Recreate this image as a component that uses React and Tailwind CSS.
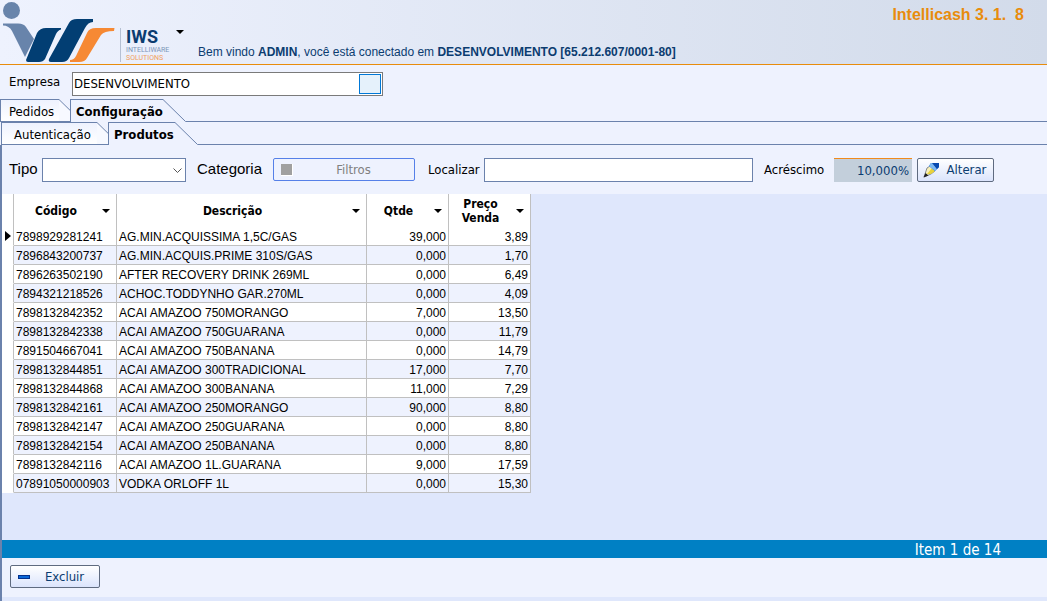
import { useState } from 'react';

const products = [
    { code: '7898929281241', name: 'AG.MIN.ACQUISSIMA 1,5C/GAS', qty: '39,000', price: '3,89' },
    { code: '7896843200737', name: 'AG.MIN.ACQUIS.PRIME 310S/GAS', qty: '0,000', price: '1,70' },
    { code: '7896263502190', name: 'AFTER RECOVERY DRINK 269ML', qty: '0,000', price: '6,49' },
    { code: '7894321218526', name: 'ACHOC.TODDYNHO GAR.270ML', qty: '0,000', price: '4,09' },
    { code: '7898132842352', name: 'ACAI AMAZOO 750MORANGO', qty: '7,000', price: '13,50' },
    { code: '7898132842338', name: 'ACAI AMAZOO 750GUARANA', qty: '0,000', price: '11,79' },
    { code: '7891504667041', name: 'ACAI AMAZOO 750BANANA', qty: '0,000', price: '14,79' },
    { code: '7898132844851', name: 'ACAI AMAZOO 300TRADICIONAL', qty: '17,000', price: '7,70' },
    { code: '7898132844868', name: 'ACAI AMAZOO 300BANANA', qty: '11,000', price: '7,29' },
    { code: '7898132842161', name: 'ACAI AMAZOO 250MORANGO', qty: '90,000', price: '8,80' },
    { code: '7898132842147', name: 'ACAI AMAZOO 250GUARANA', qty: '0,000', price: '8,80' },
    { code: '7898132842154', name: 'ACAI AMAZOO 250BANANA', qty: '0,000', price: '8,80' },
    { code: '7898132842116', name: 'ACAI AMAZOO 1L.GUARANA', qty: '9,000', price: '17,59' },
    { code: '07891050000903', name: 'VODKA ORLOFF 1L', qty: '0,000', price: '15,30' },
];

const Logo = () => (
    <svg width="120" height="64" viewBox="0 0 120 64" className="shrink-0" aria-hidden="true">
        <circle cx="11.5" cy="10.5" r="8.5" fill="#6884ab" />
        <path d="M3 23.5H18Q24 23.5 26 27L34 39L25 57L12 31Q9 25.5 3 25.5Z" fill="#6884ab" />
        <path d="M61 28H46Q40 28 37 33L26 60Q26 62 28 62H39Q43 62 45 59L56 34Q58 30 61 29.5Z" fill="#023e73" />
        <path d="M93 19H77Q71 19 69 23L49 59Q48 62 51 62H62Q67 62 69 58L85 28Q88 22 93 22Z" fill="#023e73" />
        <path d="M114.5 28H96Q89 28 87 33L76 56Q74 60 70 60V62H79Q85 62 87 58L101 35Q104 31 114 31Z" fill="#f68934" />
    </svg>
);

const Caret = () => (
    <svg width="8" height="4" viewBox="0 0 8 4" className="shrink-0" aria-hidden="true">
        <path d="M0 0H8L4 4Z" fill="#000" />
    </svg>
);

const PencilIcon = () => (
    <svg width="17" height="16" viewBox="0 0 17 16" className="shrink-0" aria-hidden="true">
        <path d="M1 15L4 6L7 4L12 9L8 12Z" fill="#f8f0b8" stroke="#6b7280" strokeWidth="0.8" />
        <path d="M4 12L9 6L12 9L8 12Z" fill="#e8d23c" />
        <path d="M0.5 15.5L2.5 11L5.5 13.5Z" fill="#222" />
        <path d="M6 4L8 1H16V5L12 9Z" fill="#0a5fd0" />
        <path d="M6 4L8 1H10L14 7L12 9Z" fill="#7db8f2" />
        <path d="M9 1H16V5L14 7Z" fill="#0648b0" />
    </svg>
);

const Tab = ({ active, onClick, children, className }) => (
    <button
        role="tab"
        aria-selected={active}
        onClick={onClick}
        className={`relative h-[23px] shrink-0 border-l border-t border-[#6b82ac] text-left whitespace-nowrap text-black ${
            active
                ? 'z-10 bg-[#eef2fe] pt-px font-bold'
                : 'border-b bg-linear-to-b from-[#eef2fe] to-white pt-[2px]'
        } ${className}`}
    >
        {children}
        <svg width="23" height="23" viewBox="0 0 23 23" className="absolute -top-px left-full" aria-hidden="true">
            <path d={active ? 'M0 0L23 23H0Z' : 'M0 0L22 22H0Z'} fill={active ? '#eef2fe' : '#f7f9ff'} />
            <path d="M0 0.5L22.5 22.5" fill="none" stroke="#6b82ac" />
        </svg>
    </button>
);

const HeaderCell = ({ children }) => (
    <th className="h-[33px] border-r border-[#c0c0c0] p-0 font-bold">
        <div className="flex items-center pr-[6px]">
            <span className="flex-1 pr-[4px] text-center leading-[14px]">{children}</span>
            <Caret />
        </div>
    </th>
);

const App = () => {
    const [mainTab, setMainTab] = useState('config');
    const [subTab, setSubTab] = useState('produtos');
    const [selected, setSelected] = useState(0);

    return (
        <div className="flex min-h-screen flex-col bg-[#eef2fe] font-['DejaVu_Sans_Condensed','DejaVu_Sans',sans-serif] text-[13px] text-black">
            <header className="flex h-[65px] border-b border-[#e88c0c] bg-linear-to-r from-[#eef2fe] to-[#d2dbea] font-['Liberation_Sans',Arial,sans-serif]">
                <Logo />
                <div className="mt-[28px] flex h-[34px] w-[56px] flex-col border-l border-[#b5c0d3] pl-[5px] font-['Roboto',sans-serif]">
                    <span className="text-[18px] leading-[18px] font-bold text-[#0b3c70]">IWS</span>
                    <span className="text-[7px] leading-[8px] text-[#7d95b8]">INTELLIWARE</span>
                    <span className="text-[7px] leading-[8px] text-[#f0a060]">SOLUTIONS</span>
                </div>
                <button aria-label="Menu" className="flex h-[64px] w-[8px] items-center justify-center">
                    <Caret />
                </button>
                <p className="mt-[44px] ml-[14px] flex-1 text-[12px] leading-[16px] text-[#0b3c70]">
                    Bem vindo <b>ADMIN</b>, você está conectado em <b>DESENVOLVIMENTO [65.212.607/0001-80]</b>
                </p>
                <h1 className="mt-[5px] mr-[23px] text-[16px] leading-[20px] font-bold whitespace-pre text-[#e88c0c]">Intellicash 3. 1.  8</h1>
            </header>

            <div className="flex h-[34px] items-start pt-[7px] pl-[9px]">
                <label htmlFor="empresa" className="w-[63px] leading-[20px]">Empresa</label>
                <div className="flex h-[24px] w-[311px] items-center border border-[#7a7a7a] bg-white pr-px">
                    <input id="empresa" defaultValue="DESENVOLVIMENTO" className="min-w-0 flex-1 px-px outline-none" />
                    <button aria-label="Selecionar empresa" className="h-[20px] w-[22px] border border-[#0078d7] bg-[#e5f1fb]" />
                </div>
            </div>

            <div role="tablist" className="flex">
                <Tab active={mainTab === 'pedidos'} onClick={() => setMainTab('pedidos')} className="w-[59px] pl-[8px]">Pedidos</Tab>
                <div className="w-[11px] border-b border-[#6b82ac]" />
                <Tab active={mainTab === 'config'} onClick={() => setMainTab('config')} className="w-[93px] pl-[5px]">Configuração</Tab>
                <div className="w-[22px]" />
                <div className="flex-1 border-b border-[#6b82ac]" />
            </div>

            <div className="flex flex-1 flex-col">
                <div role="tablist" className="flex pl-px">
                    <Tab active={subTab === 'auth'} onClick={() => setSubTab('auth')} className="w-[96px] pl-[12px]">Autenticação</Tab>
                    <div className="w-[11px] border-b border-[#6b82ac]" />
                    <Tab active={subTab === 'produtos'} onClick={() => setSubTab('produtos')} className="w-[67px] pl-[5px]">Produtos</Tab>
                    <div className="w-[22px]" />
                    <div className="flex-1 border-b border-[#6b82ac]" />
                </div>

                <main className="flex flex-1 flex-col border-l-2 border-[#6b82ac]">
                    <div className="flex h-[49px] items-center pl-[7px]">
                        <label htmlFor="tipo" className="w-[33px] font-['Liberation_Sans',Arial,sans-serif] text-[15px]">Tipo</label>
                        <div className="relative">
                            <select id="tipo" className="block h-[24px] w-[144px] appearance-none border border-[#6b82ac] bg-white px-1 outline-none">
                                <option></option>
                            </select>
                            <svg width="9" height="6" viewBox="0 0 9 6" className="pointer-events-none absolute top-[10px] right-[4px]" aria-hidden="true">
                                <path d="M0.5 0.5L4.5 4.5L8.5 0.5" fill="none" stroke="#555" />
                            </svg>
                        </div>
                        <span className="ml-[11px] w-[76px] font-['Liberation_Sans',Arial,sans-serif] text-[15px]">Categoria</span>
                        <button disabled className="flex h-[23px] w-[142px] items-center rounded-[2px] border border-[#5580e8] pl-[7px] text-[#808080]">
                            <span className="box-content size-[11px] border-r border-b border-white bg-[#a0a0a0]" />
                            <span className="flex-1 text-center">Filtros</span>
                        </button>
                        <label htmlFor="localizar" className="ml-[13px] w-[56px]">Localizar</label>
                        <input id="localizar" className="h-[24px] w-[269px] border border-[#6b82ac] bg-white px-1 outline-none" />
                        <label htmlFor="acrescimo" className="ml-[11px] w-[70px]">Acréscimo</label>
                        <input id="acrescimo" defaultValue="10,000%" className="h-[24px] w-[78px] border-t border-[#f08a1c] bg-[#c3cfdb] pr-[3px] text-right text-[#0b3c70] outline-none" />
                        <button className="ml-[5px] flex h-[24px] w-[77px] items-center rounded-[2px] border border-[#5f6b80] bg-linear-to-b from-white to-[#dbe4fc] pl-[5px] text-[#0b3c70]">
                            <PencilIcon />
                            <span className="flex-1 text-center">Alterar</span>
                        </button>
                    </div>

                    <div className="flex-1 bg-[#dfe7fc]">
                        <table className="table-fixed border-separate border-spacing-0 bg-white text-[12px]">
                            <colgroup>
                                <col className="w-[12px]" />
                                <col className="w-[103px]" />
                                <col className="w-[250px]" />
                                <col className="w-[82px]" />
                                <col className="w-[82px]" />
                            </colgroup>
                            <thead>
                                <tr>
                                    <th className="border-r border-[#c0c0c0] p-0" />
                                    <HeaderCell>Código</HeaderCell>
                                    <HeaderCell>Descrição</HeaderCell>
                                    <HeaderCell>Qtde</HeaderCell>
                                    <HeaderCell>Preço<br />Venda</HeaderCell>
                                </tr>
                            </thead>
                            <tbody className="font-['Liberation_Sans',Arial,sans-serif] leading-[16px] whitespace-nowrap">
                                {products.map((product, index) => (
                                    <tr
                                        key={product.code}
                                        onClick={() => setSelected(index)}
                                        className="odd:bg-white even:bg-[#eef2fe] *:border-r *:border-b *:border-[#c0c0c0] *:px-[2px] *:pt-[2px] *:pb-0"
                                    >
                                        <td className="border-b-white! bg-white pt-0!">
                                            {index === selected && (
                                                <svg width="6" height="10" viewBox="0 0 6 10" className="ml-px block" aria-hidden="true">
                                                    <path d="M0 0L6 5L0 10Z" fill="#000" />
                                                </svg>
                                            )}
                                        </td>
                                        <td>{product.code}</td>
                                        <td>{product.name}</td>
                                        <td className="text-right">{product.qty}</td>
                                        <td className="text-right">{product.price}</td>
                                    </tr>
                                ))}
                            </tbody>
                        </table>
                    </div>

                    <div className="h-[18px] bg-[#0080c4] pr-[46px] text-right text-[15px] leading-[20px] text-white">
                        Item {selected + 1} de {products.length}
                    </div>
                    <div className="h-[43px] border-b-4 border-[#dfe7fc] pt-[7px] pl-[8px]">
                        <button className="flex h-[23px] w-[90px] items-center rounded-[2px] border border-[#5f6b80] bg-linear-to-b from-white to-[#dbe4fc] pl-[7px] text-[#0b3c70]">
                            <span className="h-[4px] w-[12px] border border-[#03318c] bg-[#0a66d8]" />
                            <span className="flex-1 text-center">Excluir</span>
                        </button>
                    </div>
                </main>
            </div>
        </div>
    );
};

export default App;
